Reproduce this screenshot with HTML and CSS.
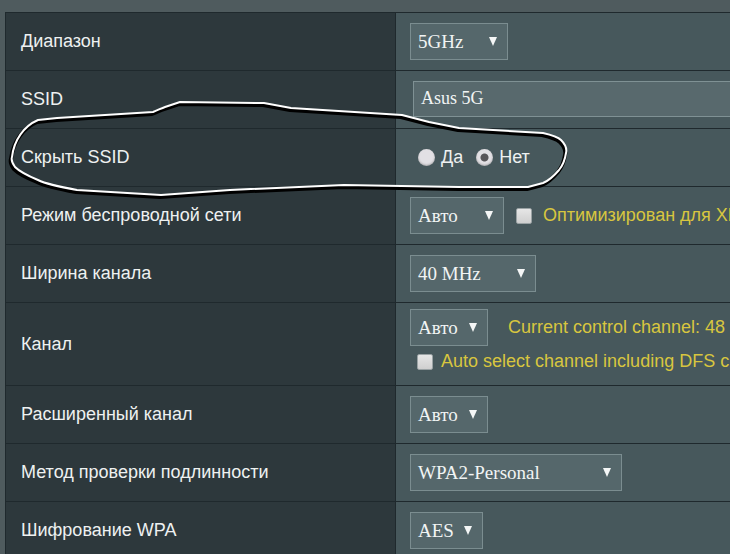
FILE: index.html
```html
<!DOCTYPE html>
<html lang="ru">
  <head>
    <meta charset="UTF-8" />
    <meta name="viewport" content="width=device-width, initial-scale=1.0" />
    <title>Беспроводная сеть</title>
    <link rel="stylesheet" href="styles.css">
  </head>
  <body>
    <div class="settings">
      <div class="row">
        <div class="label">Диапазон</div>
        <div class="field">
          <div class="select sel-band"><span>5GHz</span><i class="arrow"></i></div>
        </div>
      </div>
      <div class="row">
        <div class="label">SSID</div>
        <div class="field">
          <div class="input">Asus 5G</div>
        </div>
      </div>
      <div class="row">
        <div class="label">Скрыть SSID</div>
        <div class="field">
          <label class="radio"><i class="dot"></i>Да</label>
          <label class="radio radio-on"><i class="dot"></i>Нет</label>
        </div>
      </div>
      <div class="row">
        <div class="label">Режим беспроводной сети</div>
        <div class="field">
          <div class="select sel-mode"><span>Авто</span><i class="arrow"></i></div>
          <i class="check"></i>
          <span class="note">Оптимизирован для Xbox</span>
        </div>
      </div>
      <div class="row">
        <div class="label">Ширина канала</div>
        <div class="field">
          <div class="select sel-width"><span>40 MHz</span><i class="arrow"></i></div>
        </div>
      </div>
      <div class="row row-tall">
        <div class="label">Канал</div>
        <div class="field field-stack">
          <div class="line">
            <div class="select sel-auto"><span>Авто</span><i class="arrow"></i></div>
            <span class="note note-channel">Current control channel: 48</span>
          </div>
          <div class="line line-dfs">
            <i class="check"></i>
            <span class="note">Auto select channel including DFS channels</span>
          </div>
        </div>
      </div>
      <div class="row">
        <div class="label">Расширенный канал</div>
        <div class="field">
          <div class="select sel-auto"><span>Авто</span><i class="arrow"></i></div>
        </div>
      </div>
      <div class="row">
        <div class="label">Метод проверки подлинности</div>
        <div class="field">
          <div class="select sel-auth"><span>WPA2-Personal</span><i class="arrow"></i></div>
        </div>
      </div>
      <div class="row">
        <div class="label">Шифрование WPA</div>
        <div class="field">
          <div class="select sel-aes"><span>AES</span><i class="arrow"></i></div>
        </div>
      </div>
    </div>

    <!-- hand drawn circle around the "hide SSID" row -->
    <svg class="scribble" width="730" height="554" viewBox="0 0 730 554">
      <path class="scribble-shadow" d="M12 157 C14 140 24 126 38 120 L57 118 L153 112 C158 110 162 108 165 107 L180 102 L264 103 L291 108 L402 115 L429 122 L459 128 L543 133 C552 135 558 137 561 140 C566 145 567 149 566 153 C565 160 563 165 559 170 C553 177 548 181 543 183 L528 187 L459 187 L344 185 L230 190 L161 195 L77 190 C60 187 46 184 38 180 C26 175 19 171 15 167 C12 163 11 160 12 157 Z" />
      <path class="scribble-line" d="M12 157 C14 140 24 126 38 120 L57 118 L153 112 C158 110 162 108 165 107 L180 102 L264 103 L291 108 L402 115 L429 122 L459 128 L543 133 C552 135 558 137 561 140 C566 145 567 149 566 153 C565 160 563 165 559 170 C553 177 548 181 543 183 L528 187 L459 187 L344 185 L230 190 L161 195 L77 190 C60 187 46 184 38 180 C26 175 19 171 15 167 C12 163 11 160 12 157 Z" />
    </svg>
  </body>
</html>
```

FILE: styles.css
```css
* {
  box-sizing: border-box;
}
body {
  margin: 0;
  height: 554px;
  overflow: hidden;
  background: #4f5b5e;
  font-family: "Liberation Sans", Arial, sans-serif;
  font-size: 18px;
}

.settings {
  margin: 12px 0 0 5px;
  width: 800px;
  border-top: 1px solid #1f292d;
  border-left: 1px solid #1f292d;
}
.row {
  display: grid;
  grid-template-columns: 389px 1fr;
  height: 58px;
  border-bottom: 1px solid #1f292d;
}
.row-tall {
  height: 83px;
}
.label {
  display: flex;
  align-items: center;
  padding-left: 15px;
  background: #2d383c;
  color: #eef1f1;
}
.field {
  display: flex;
  align-items: center;
  padding-left: 14px;
  background: #47585c;
  border-left: 1px solid #1f292d;
}
.field-stack {
  flex-direction: column;
  align-items: flex-start;
  justify-content: flex-start;
  padding-top: 6px;
}
.line {
  display: flex;
  align-items: center;
  white-space: nowrap;
}
.line-dfs {
  margin: 5px 0 0 7px;
}

.select {
  display: flex;
  align-items: center;
  justify-content: space-between;
  height: 37px;
  padding: 0 10px 0 7px;
  background: #55676b;
  border: 1px solid #7b8d90;
  color: #f1f4f4;
  font-family: "Liberation Serif", "Times New Roman", serif;
  font-size: 19px;
  white-space: nowrap;
}
.arrow {
  width: 0;
  height: 0;
  border-left: 4.5px solid transparent;
  border-right: 4.5px solid transparent;
  border-top: 9px solid #f4f6f6;
}
.sel-band { width: 98px; }
.sel-mode { width: 94px; }
.sel-width { width: 126px; }
.sel-auto { width: 78px; }
.sel-auth { width: 212px; }
.sel-aes { width: 73px; }

.input {
  align-self: flex-start;
  margin: 10px 0 0 3px;
  width: 400px;
  height: 36px;
  padding: 6px 7px;
  background: #58696d;
  border: 1px solid #7f9194;
  color: #f1f4f4;
  font-family: "Liberation Serif", "Times New Roman", serif;
  font-size: 18px;
}

.radio {
  display: flex;
  align-items: center;
  margin-left: 8px;
  margin-right: 5px;
  color: #eef1f1;
}
.dot {
  width: 17px;
  height: 17px;
  margin-right: 6px;
  border-radius: 50%;
  background: #e2e0e4;
  box-shadow: inset 0 -1px 2px rgba(0, 0, 0, 0.25);
}
.radio-on .dot {
  background: radial-gradient(circle, #585659 0 3.5px, #e2e0e4 4.5px);
}

.check {
  flex: none;
  width: 16px;
  height: 16px;
  margin: 0 11px 0 12px;
  border-radius: 2px;
  background: linear-gradient(#e6e6e6, #cfcfcf);
  border: 1px solid #9aa2a4;
}
.line-dfs .check {
  margin: 0 8px 0 0;
}
.note {
  color: #d8c63f;
  white-space: nowrap;
}
.note-channel {
  margin-left: 20px;
}

.scribble {
  position: absolute;
  top: 0;
  left: 0;
  pointer-events: none;
}
.scribble path {
  fill: none;
  stroke-linejoin: round;
  stroke-linecap: round;
}
.scribble-shadow {
  stroke: #000;
  stroke-width: 4;
  transform: translate(-1px, 2px);
}
.scribble-line {
  stroke: #fff;
  stroke-width: 2;
}
```
